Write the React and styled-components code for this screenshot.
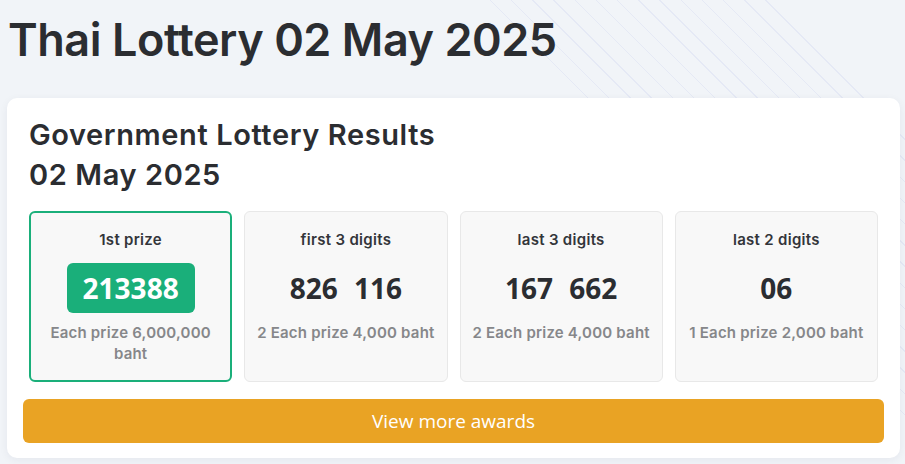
import React from 'react';
import styled, { createGlobalStyle } from 'styled-components';

const GlobalStyle = createGlobalStyle`
  html {
    min-height: 100%;
    background-color: #f1f4f8;
    background-image:
      linear-gradient(45deg, #f1f4f8 0 672px, transparent 672px 878px, #f1f4f8 878px),
      repeating-linear-gradient(45deg, transparent 0 14px, #e5e9f5 14px 15px);
    background-attachment: fixed;
  }
  body {
    margin: 0;
    font-family: Inter, "Noto Sans", sans-serif;
    color: #2b2d31;
  }
`;

const Page = styled.div`
  padding: 12px 5px 6px 7px;
`;

const Title = styled.h1`
  margin: 0 0 30px 1px;
  font-size: 45px;
  line-height: 56px;
  font-weight: 600;
  letter-spacing: -0.45px;
  color: #2b2d31;
`;

const Card = styled.section`
  background: #fff;
  border-radius: 10px;
  box-shadow: 0 2px 8px rgba(30, 40, 70, 0.06);
  padding: 17px 16px 15px;
`;

const CardTitle = styled.h2`
  margin: 0 6px 16px;
  font-size: 29px;
  line-height: 40px;
  font-weight: 600;
  letter-spacing: 0.6px;
  color: #2b2d31;
`;

const PrizeRow = styled.div`
  display: grid;
  grid-template-columns: repeat(4, 1fr);
  gap: 12px;
  padding: 0 6px;
  margin-bottom: 17px;
`;

const PrizeBox = styled.div`
  background: #f8f8f8;
  border: ${(p) => (p.$main ? '2px solid #1aaf7a' : '1px solid #e8e8e8')};
  border-radius: 6px;
  padding: ${(p) => (p.$main ? '17px 9px 10px' : '18px 10px 10px')};
  height: 171px;
  box-sizing: border-box;
  display: flex;
  flex-direction: column;
  align-items: center;
  text-align: center;
`;

const PrizeLabel = styled.div`
  font-size: 15px;
  line-height: 20px;
  font-weight: 600;
  letter-spacing: 0.3px;
  color: #33353a;
`;

const Numbers = styled.div`
  display: flex;
  align-items: center;
  justify-content: center;
  height: 50px;
  margin: 13px 0 9px;
  font-family: "Open Sans", "Liberation Sans", sans-serif;
  font-size: 28px;
  font-weight: 700;
  color: #2b2d31;
`;

const Num = styled.span`
  margin: 0 8px;
`;

const Badge = styled.span`
  background: #1aaf7a;
  color: #fff;
  border-radius: 6px;
  height: 50px;
  padding: 0 16px;
  display: flex;
  align-items: center;
`;

const PrizeNote = styled.div`
  font-size: 15px;
  line-height: 21px;
  font-weight: 600;
  letter-spacing: 0.2px;
  color: #86878a;
`;

const MoreButton = styled.button`
  display: block;
  width: 100%;
  height: 44px;
  border: none;
  border-radius: 6px;
  background: #e9a324;
  color: #fff;
  font-family: "Open Sans", "Liberation Sans", sans-serif;
  font-size: 19px;
  font-weight: 400;
  cursor: pointer;
`;

const prizes = [
  { label: 'first 3 digits', numbers: ['826', '116'], note: '2 Each prize 4,000 baht' },
  { label: 'last 3 digits', numbers: ['167', '662'], note: '2 Each prize 4,000 baht' },
  { label: 'last 2 digits', numbers: ['06'], note: '1 Each prize 2,000 baht' },
];

export default function App() {
  return (
    <Page>
      <GlobalStyle />
      <Title>Thai Lottery 02 May 2025</Title>
      <Card>
        <CardTitle>
          Government Lottery Results
          <br />
          02 May 2025
        </CardTitle>
        <PrizeRow>
          <PrizeBox $main>
            <PrizeLabel>1st prize</PrizeLabel>
            <Numbers>
              <Badge>213388</Badge>
            </Numbers>
            <PrizeNote>Each prize 6,000,000 baht</PrizeNote>
          </PrizeBox>
          {prizes.map((p) => (
            <PrizeBox key={p.label}>
              <PrizeLabel>{p.label}</PrizeLabel>
              <Numbers>
                {p.numbers.map((n) => (
                  <Num key={n}>{n}</Num>
                ))}
              </Numbers>
              <PrizeNote>{p.note}</PrizeNote>
            </PrizeBox>
          ))}
        </PrizeRow>
        <MoreButton type="button">View more awards</MoreButton>
      </Card>
    </Page>
  );
}
